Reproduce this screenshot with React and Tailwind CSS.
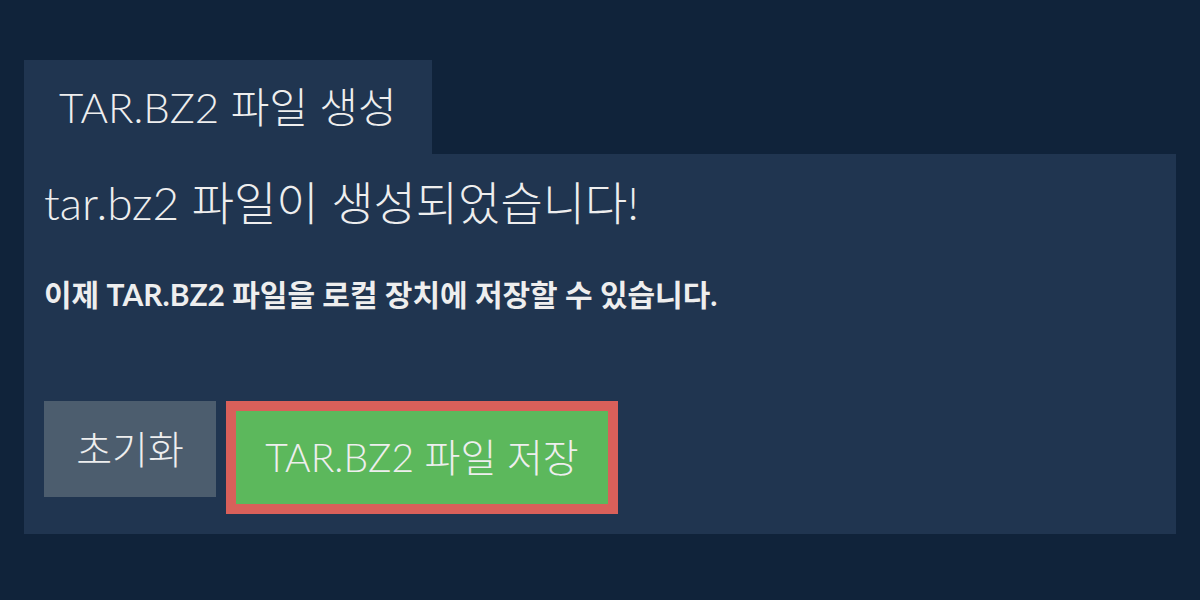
import React from 'react';

const font = { fontFamily: 'Lato, "Noto Sans CJK KR", sans-serif' };

function App() {
  return (
    <div className="w-[1200px] h-[600px] bg-[#10233a] text-[#eeeeee] px-6 pt-[60px]" style={font}>
      <div className="inline-flex items-center h-[94px] px-[35px] bg-[#203550] text-[42px] font-light leading-none">
        TAR.BZ2 파일 생성
      </div>
      <div className="bg-[#203550] px-5 pt-5 pb-5">
        <h1 className="text-[46px] font-light leading-[1.2] pt-px">tar.bz2 파일이 생성되었습니다!</h1>
        <p className="mt-[46px] text-[30px] font-bold leading-[1.2]">
          이제 TAR.BZ2 파일을 로컬 장치에 저장할 수 있습니다.
        </p>
        <div className="mt-[89px] flex items-start gap-[10px]">
          <button className="w-[172px] h-[96px] bg-[#4c5d6e] text-[39px] font-light leading-none">초기화</button>
          <button className="w-[392px] h-[113px] bg-[#5cb85c] border-[10px] border-[#d9605a] text-[39px] font-light leading-none">
            TAR.BZ2 파일 저장
          </button>
        </div>
      </div>
    </div>
  );
}

export default App;
